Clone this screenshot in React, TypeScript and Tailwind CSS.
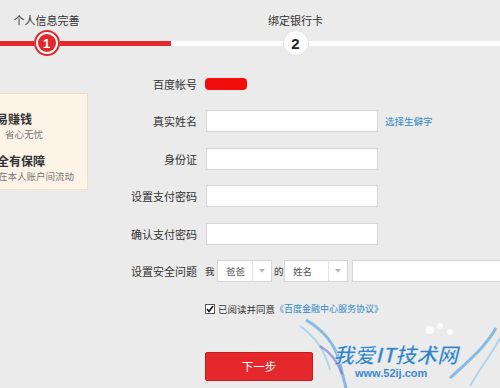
import React from "react";

const font = { fontFamily: '"Noto Sans CJK SC", "Noto Sans", sans-serif' };

function Step({ n, label, active, barLeft, barRight }: { n: string; label: string; active: boolean; barLeft: string; barRight: string }) {
  return (
    <div className="w-[249px] shrink-0 flex flex-col items-center">
      <div className="text-[11px] leading-[14px] text-[#333]">{label}</div>
      <div className="mt-[3px] h-[26px] w-full flex items-center">
        <div className={`flex-1 h-[5px] ${barLeft}`} />
        {active ? (
          <div className="w-[26px] h-[26px] rounded-full border-2 border-[#e0282d] bg-white p-[2px] flex">
            <div className="flex-1 rounded-full bg-[#e0282d] flex items-center justify-center text-white text-[13px] font-bold leading-none" style={{ fontFamily: '"Liberation Sans", Arial, sans-serif' }}>
              {n}
            </div>
          </div>
        ) : (
          <div className="w-[26px] h-[26px] rounded-full border border-[#e2e2e2] bg-white flex items-center justify-center text-[#222] text-[15px] font-bold leading-none" style={{ fontFamily: '"Liberation Sans", Arial, sans-serif' }}>
            {n}
          </div>
        )}
        <div className={`flex-1 h-[5px] ${barRight}`} />
      </div>
    </div>
  );
}

function Label({ children }: { children: React.ReactNode }) {
  return <div className="w-[109px] shrink-0 text-right text-[11px] text-[#333] leading-[22px]">{children}</div>;
}

function Input({ w }: { w: string }) {
  return <div className={`${w} h-[22px] bg-white border border-[#d6d6d6] shrink-0`} />;
}

function Select({ w, text, div }: { w: string; text: string; div: string }) {
  return (
    <div className={`${w} h-[22px] bg-white border border-[#d6d6d6] flex items-center shrink-0`}>
      <div className="pl-[8px] text-[9.5px] text-[#555] flex-1">{text}</div>
      <div className={`h-full border-l border-[#e6e6e6] ${div} flex items-center justify-center`}>
        <svg width="6" height="4" viewBox="0 0 6 4"><path d="M0 0 L6 0 L3 3.5 Z" fill="#b5b5b5" /></svg>
      </div>
    </div>
  );
}

export default function App() {
  return (
    <div className="w-[500px] h-[388px] bg-[#ebebeb] overflow-hidden relative" style={font}>
      {/* header steps */}
      <div className="pt-[13px] flex ml-[-78px]">
        <Step n="1" label="个人信息完善" active barLeft="bg-[#e0282d]" barRight="bg-[#e0282d]" />
        <Step n="2" label="绑定银行卡" active={false} barLeft="bg-white" barRight="bg-white" />
        <div className="w-[249px] shrink-0 flex flex-col">
          <div className="h-[14px]" />
          <div className="mt-[3px] h-[26px] flex items-center">
            <div className="flex-1 h-[5px] bg-white" />
          </div>
        </div>
      </div>

      {/* main */}
      <div className="mt-[17px] flex">
        <div className="w-[88px] h-[97px] mt-[20px] shrink-0 bg-[#fdf4e7] border border-l-0 border-[#f2dfc6] overflow-hidden">
          <div className="ml-[-4px] mt-[17px] text-[12px] font-bold leading-[16px] text-[#333] whitespace-nowrap">易赚钱</div>
          <div className="ml-[5px] mt-[1px] text-[9.5px] leading-[12px] text-[#777] whitespace-nowrap">省心无忧</div>
          <div className="ml-[-3px] mt-[13px] text-[12px] font-bold leading-[16px] text-[#333] whitespace-nowrap">全有保障</div>
          <div className="ml-[-2px] mt-[1px] text-[9.5px] leading-[12px] text-[#777] whitespace-nowrap">在本人账户间流动</div>
        </div>

        <div className="flex flex-col gap-[15.4px]">
          <div className="flex items-center h-[22px]">
            <Label>百度帐号</Label>
            <div className="ml-[8px] w-[42px] h-[12px] rounded-[4px] bg-[#f20d0d]" />
          </div>
          <div className="flex items-center h-[22px]">
            <Label>真实姓名</Label>
            <div className="ml-[9px]"><Input w="w-[172px]" /></div>
            <div className="ml-[7px] text-[9.5px] text-[#2f88c4]">选择生僻字</div>
          </div>
          <div className="flex items-center h-[22px]">
            <Label>身份证</Label>
            <div className="ml-[9px]"><Input w="w-[172px]" /></div>
          </div>
          <div className="flex items-center h-[22px]">
            <Label>设置支付密码</Label>
            <div className="ml-[9px]"><Input w="w-[172px]" /></div>
          </div>
          <div className="flex items-center h-[22px]">
            <Label>确认支付密码</Label>
            <div className="ml-[9px]"><Input w="w-[172px]" /></div>
          </div>
          <div className="flex items-center h-[22px]">
            <Label>设置安全问题</Label>
            <div className="ml-[8px] text-[9.5px] text-[#333] w-[12px]">我</div>
            <Select w="w-[55px]" text="爸爸" div="w-[19px]" />
            <div className="ml-[2px] text-[9.5px] text-[#333] w-[10px]">的</div>
            <Select w="w-[64px]" text="姓名" div="w-[19px]" />
            <div className="ml-[4px]"><Input w="w-[160px]" /></div>
          </div>

          <div className="flex items-center mt-[4.6px] h-[14px] ml-[117px]">
            <div className="w-[10px] h-[10px] border border-[#555] bg-white flex items-center justify-center">
              <svg width="8" height="8" viewBox="0 0 8 8"><path d="M1 4 L3 6.5 L7 1" stroke="#111" strokeWidth="1.6" fill="none" /></svg>
            </div>
            <div className="ml-[3px] text-[9.5px] text-[#333] whitespace-nowrap">已阅读并同意</div>
            <div className="text-[9px] text-[#2f88c4] whitespace-nowrap">《百度金融中心服务协议》</div>
          </div>

          <div className="ml-[117px] mt-[20.6px] w-[108px] h-[29px] bg-[#e4282b] border border-[#c51a1e] rounded-[2px] flex items-center justify-center text-white text-[11.5px]">
            下一步
          </div>
        </div>
      </div>

      {/* watermark */}
      <div className="absolute left-[300px] top-[318px] w-[200px] h-[70px] pointer-events-none">
        <svg className="absolute left-0 top-0" width="200" height="70" viewBox="0 0 200 70">
          <path d="M6 2 C20 10 34 22 40 45 C42 55 44 62 46 70" stroke="#5aa7e0" strokeWidth="3" fill="none" opacity="0.7" />
          <path d="M0 8 C14 18 24 30 30 52" stroke="#8cc3ec" strokeWidth="2" fill="none" opacity="0.6" />
          <path d="M20 28 C30 34 38 44 42 56" stroke="#6a6fc8" strokeWidth="2.5" fill="none" opacity="0.6" />
          <path d="M196 10 C186 28 170 42 150 60" stroke="#5aa7e0" strokeWidth="3" fill="none" opacity="0.7" />
          <path d="M200 20 C192 36 180 50 170 68" stroke="#8cc3ec" strokeWidth="2" fill="none" opacity="0.6" />
          <circle cx="130" cy="12" r="4" fill="#ffffff" opacity="0.8" />
          <circle cx="140" cy="8" r="3" fill="#ffffff" opacity="0.8" />
          <circle cx="150" cy="14" r="3" fill="#ffffff" opacity="0.7" />
        </svg>
        <div className="absolute left-[33px] top-[25px] text-[21px] leading-[22px] font-bold italic text-[#3584c8] whitespace-nowrap" style={{ WebkitTextStroke: "0.4px #ffffff" }}>
          我爱IT技术网
        </div>
        <div className="absolute left-[55px] top-[50px] text-[11px] leading-[11px] font-bold text-[#3a8ad0] whitespace-nowrap" style={{ fontFamily: '"Liberation Sans", Arial, sans-serif' }}>
          www.52ij.com
        </div>
      </div>
    </div>
  );
}
